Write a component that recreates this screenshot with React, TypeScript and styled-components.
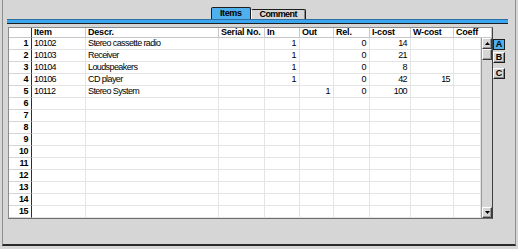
import styled, { createGlobalStyle } from "styled-components";

const GlobalStyle = createGlobalStyle`
  html, body {
    margin: 0;
    padding: 0;
    background: #d6d6d6;
  }
  body {
    width: 518px;
    height: 249px;
    overflow: hidden;
    font-family: "Liberation Sans", Arial, sans-serif;
  }
`;

type Col = { key: string; label: string; width: number; align: "left" | "right" };

const columns: Col[] = [
  { key: "item", label: "Item", width: 54, align: "left" },
  { key: "descr", label: "Descr.", width: 133, align: "left" },
  { key: "serial", label: "Serial No.", width: 46, align: "left" },
  { key: "in", label: "In", width: 35, align: "right" },
  { key: "out", label: "Out", width: 34, align: "right" },
  { key: "rel", label: "Rel.", width: 36, align: "right" },
  { key: "icost", label: "I-cost", width: 41, align: "right" },
  { key: "wcost", label: "W-cost", width: 43, align: "right" },
  { key: "coeff", label: "Coeff", width: 38, align: "right" },
];

type Row = Record<string, string>;

const data: Row[] = [
  { item: "10102", descr: "Stereo cassette radio", in: "1", rel: "0", icost: "14" },
  { item: "10103", descr: "Receiver", in: "1", rel: "0", icost: "21" },
  { item: "10104", descr: "Loudspeakers", in: "1", rel: "0", icost: "8" },
  { item: "10106", descr: "CD player", in: "1", rel: "0", icost: "42", wcost: "15" },
  { item: "10112", descr: "Stereo System", out: "1", rel: "0", icost: "100" },
];

const SCROLL_W = 11;
const headTemplate = `23px ${columns.map((c) => c.width + "px").join(" ")}`;
const bodyTemplate = `23px ${columns
  .map((c, i) => (i === columns.length - 1 ? c.width - SCROLL_W : c.width) + "px")
  .join(" ")}`;

export default function App() {
  const rows = Array.from({ length: 15 }, (_, i) => data[i] || {});

  return (
    <>
      <GlobalStyle />
      <Frame>
        <TabStrip>
          <Tab $active>Items</Tab>
          <Tab>Comment</Tab>
        </TabStrip>
        <Bar />
        <Content>
          <Table>
            <HeadRow style={{ gridTemplateColumns: headTemplate }}>
              <HeadNum />
              {columns.map((c) => (
                <HeadCell key={c.key}>{c.label}</HeadCell>
              ))}
            </HeadRow>
            <Body>
              <Rows style={{ gridTemplateColumns: bodyTemplate }}>
                {rows.map((r, i) => (
                  <RowFrag key={i} row={r} n={i + 1} />
                ))}
              </Rows>
              <ScrollBar>
                <ScrollBtn>
                  <Arrow />
                </ScrollBtn>
                <ScrollBtn />
                <Track />
                <ScrollBtn>
                  <Arrow $down />
                </ScrollBtn>
              </ScrollBar>
            </Body>
          </Table>
          <SideTabs>
            <SideTab $active>A</SideTab>
            <SideTab>B</SideTab>
            <SideTab $gap>C</SideTab>
          </SideTabs>
        </Content>
      </Frame>
    </>
  );
}

function RowFrag({ row, n }: { row: Row; n: number }) {
  return (
    <>
      <NumCell>{n}</NumCell>
      {columns.map((c) => (
        <Cell key={c.key} $align={c.align}>
          {row[c.key] || ""}
        </Cell>
      ))}
    </>
  );
}

function Arrow({ $down }: { $down?: boolean }) {
  return (
    <svg width="5" height="3" viewBox="0 0 5 3">
      {$down ? (
        <polygon points="0,0 5,0 2.5,3" fill="#000" />
      ) : (
        <polygon points="0,3 5,3 2.5,0" fill="#000" />
      )}
    </svg>
  );
}

const Frame = styled.div`
  margin-left: 2px;
  width: 514px;
  height: 246px;
  box-sizing: border-box;
  border-left: 1px solid #8e8e8e;
  border-right: 1px solid #8e8e8e;
  border-bottom: 2px solid #2a2a2a;
  display: flex;
  flex-direction: column;
`;

const TabStrip = styled.div`
  height: 19px;
  display: flex;
  align-items: flex-end;
  padding-left: 208px;
`;

const Tab = styled.div<{ $active?: boolean }>`
  height: ${(p) => (p.$active ? 12 : 10)}px;
  padding: 0 ${(p) => (p.$active ? 8 : 8)}px;
  box-sizing: border-box;
  font-size: 9px;
  font-weight: bold;
  line-height: ${(p) => (p.$active ? 11 : 9)}px;
  letter-spacing: ${(p) => (p.$active ? -0.4 : -0.6)}px;
  color: #000;
  border: 1px solid #1e1e1e;
  border-bottom: none;
  border-radius: 2px 2px 0 0;
  background: ${(p) => (p.$active ? "#4eb0ee" : "#d6d6d6")};
  ${(p) =>
    !p.$active &&
    `
    border-left-color: #ffffff;
    box-shadow: inset -1px 0 #8a8a8a;
  `}
`;

const Bar = styled.div`
  margin-left: 4px;
  width: 501px;
  height: 5px;
  box-sizing: border-box;
  border-top: 1px solid #2d6fa0;
  border-bottom: 1px solid #1e1e1e;
  background: #3aa6f0;
`;

const Content = styled.div`
  display: flex;
  align-items: flex-start;
  padding-left: 5px;
  margin-top: 3px;
`;

const Table = styled.div`
  width: 485px;
  box-sizing: border-box;
  border: 1px solid #8c8c8c;
  border-bottom-color: #6e6e6e;
  border-right-color: #404040;
  background: #fff;
`;

const HeadRow = styled.div`
  display: grid;
  height: 10px;
`;

const HeadNum = styled.div`
  border-right: 1px solid #2e2e2e;
  border-bottom: 1px solid #c8c8c8;
`;

const HeadCell = styled.div`
  box-sizing: border-box;
  border-right: 1px solid #c8c8c8;
  border-bottom: 1px solid #c8c8c8;
  padding-left: 2px;
  font-size: 9px;
  font-weight: bold;
  line-height: 9px;
  letter-spacing: -0.2px;
  white-space: nowrap;
  overflow: hidden;
`;

const Body = styled.div`
  display: flex;
  height: 180px;
`;

const Rows = styled.div`
  display: grid;
  grid-auto-rows: 12px;
`;

const Cell = styled.div<{ $align: "left" | "right" }>`
  box-sizing: border-box;
  border-right: 1px solid #e4e4e4;
  border-bottom: 1px solid #e4e4e4;
  padding: 0 3px 0 2px;
  text-align: ${(p) => p.$align};
  font-size: 9px;
  line-height: 11px;
  letter-spacing: -0.6px;
  white-space: nowrap;
  overflow: hidden;
`;

const NumCell = styled.div`
  box-sizing: border-box;
  border-right: 1px solid #2e2e2e;
  border-bottom: 1px solid #d4d4d4;
  padding-right: 3px;
  text-align: right;
  font-size: 9px;
  font-weight: bold;
  line-height: 11px;
  letter-spacing: -0.5px;
`;

const ScrollBar = styled.div`
  width: ${SCROLL_W}px;
  display: flex;
  flex-direction: column;
  background: #d6d6d6;
  box-sizing: border-box;
  border-left: 1px solid #9a9a9a;
`;

const ScrollBtn = styled.div`
  height: 11px;
  box-sizing: border-box;
  display: flex;
  align-items: center;
  justify-content: center;
  background: #d6d6d6;
  border-top: 1px solid #fff;
  border-left: 1px solid #fff;
  border-right: 1px solid #3a3a3a;
  border-bottom: 1px solid #3a3a3a;
  box-shadow: inset -1px -1px #9a9a9a;
`;

const Track = styled.div`
  flex: 1;
`;

const SideTabs = styled.div`
  display: flex;
  flex-direction: column;
  gap: 2px;
  margin-top: 12px;
`;

const SideTab = styled.div<{ $active?: boolean; $gap?: boolean }>`
  width: 12px;
  height: 11px;
  box-sizing: border-box;
  margin-top: ${(p) => (p.$gap ? 3 : 0)}px;
  font-size: 9px;
  font-weight: bold;
  line-height: 9px;
  text-align: center;
  border: 1px solid #1e1e1e;
  background: ${(p) => (p.$active ? "#4eb0ee" : "#d6d6d6")};
  ${(p) =>
    !p.$active &&
    `
    border-left-color: #ffffff;
    border-top-color: #ffffff;
    box-shadow: inset -1px -1px #8a8a8a;
  `}
`;
